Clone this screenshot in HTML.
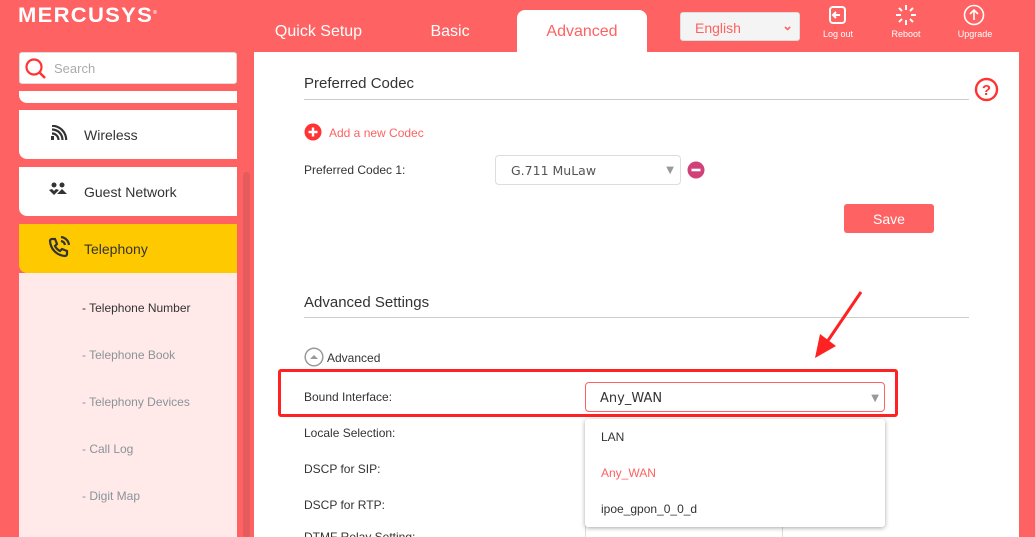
<!DOCTYPE html>
<html style="width:1035px;height:537px;overflow:hidden"><head><meta charset="utf-8"><style>
*{margin:0;padding:0;box-sizing:border-box}
body{width:1035px;height:537px;overflow:hidden;background:#fe6262;font-family:"Liberation Sans",Arial,sans-serif;position:relative}
.a{position:absolute}
.logo{left:18px;top:4px;color:#fff;font-weight:900;font-size:21px;letter-spacing:1.2px;transform:scaleX(1.05);transform-origin:left}
.tab{top:10px;height:42px;color:#fff;font-size:16px;line-height:44px;text-align:center}
.side{left:19px;width:218px;background:#fff}
.item{height:49px;border-radius:0 0 0 8px;font-size:14px;color:#333;line-height:50px;padding-left:65px}
.sub{left:82px;font-size:12px;color:#8a9499}
.lbl{left:304px;font-size:12px;color:#333}
.hdr{left:304px;font-size:15px;color:#333}
.line{left:304px;width:665px;height:1px;background:#ccc}
.tico{color:#fff;font-size:9px;text-align:center;width:50px}
</style></head><body>
<div class="a logo">MERCUSYS<sup style="font-size:5px">®</sup></div>
<div class="a tab" style="left:262px;width:113px">Quick Setup</div>
<div class="a tab" style="left:400px;width:100px">Basic</div>
<div class="a tab" style="left:517px;width:130px;background:#fff;color:#fe6262;border-radius:8px 8px 0 0">Advanced</div>
<div class="a" style="left:680px;top:12px;width:120px;height:29px;background:#f4f4f4;border:1px solid #ddd;border-radius:3px;color:#fe6262;font-size:14px;line-height:30px;padding-left:14px">English<span style="position:absolute;right:6px;top:-2px;font-size:13px;font-weight:bold">⌄</span></div>
<svg class="a" style="left:826px;top:5px" width="24" height="20"><rect x="4" y="2" width="15" height="16" rx="3" fill="none" stroke="#fff" stroke-width="2"/><path d="M14 10H8M10 7l-3 3 3 3" stroke="#fff" stroke-width="2" fill="none"/></svg>
<div class="a tico" style="left:813px;top:29px">Log out</div>
<svg class="a" style="left:895px;top:4px" width="22" height="22" stroke="#fff" stroke-width="2"><path d="M11 1v5M11 16v5M1 11h5M16 11h5M4 4l3 3M15 15l3 3M4 18l3-3M15 7l3-3"/></svg>
<div class="a tico" style="left:881px;top:29px">Reboot</div>
<svg class="a" style="left:963px;top:4px" width="22" height="22"><circle cx="11" cy="11" r="9.5" fill="none" stroke="#fff" stroke-width="1.6"/><path d="M11 16V6M7 10l4-4 4 4" stroke="#fff" stroke-width="1.6" fill="none"/></svg>
<div class="a tico" style="left:950px;top:29px">Upgrade</div>

<div class="a side" style="top:52px;height:32px;border-radius:3px;border:1px solid #ddd"></div>
<svg class="a" style="left:24px;top:57px" width="24" height="24"><circle cx="10" cy="10" r="7.5" fill="none" stroke="#f33" stroke-width="2.2"/><path d="M15 15l6 6" stroke="#f33" stroke-width="2.5"/></svg>
<div class="a" style="left:54px;top:61px;font-size:13px;color:#aaa">Search</div>
<div class="a side" style="top:91px;height:12px;border-radius:0 0 0 8px"></div>
<div class="a side item" style="top:110px">Wireless</div>
<div class="a side item" style="top:167px">Guest Network</div>
<div class="a side item" style="top:224px;background:#ffc900">Telephony</div>
<div class="a side" style="top:273px;height:264px;background:#ffe9e9"></div>
<svg class="a" style="left:51px;top:125px" width="17" height="17"><rect x="0" y="11" width="3" height="4" fill="#333"/><path d="M1 8.5a6.5 6.5 0 0 1 6.5 6.5M1 4.5a10.5 10.5 0 0 1 10.5 10.5M1 0.8a14.2 14.2 0 0 1 14.2 14.2" stroke="#333" stroke-width="2.2" fill="none"/></svg>
<svg class="a" style="left:48px;top:182px" width="22" height="14" fill="#333"><circle cx="6" cy="3" r="2.5"/><circle cx="14" cy="3" r="2.5"/><path d="M1 8l3-1 2 2 2-2 3 1-5 5zM9 12l5-5 5 5z"/></svg>
<svg class="a" style="left:48px;top:236px" width="22" height="22" fill="none" stroke="#333" stroke-width="2.2"><path d="M4 3l3 0 2 5-2 2a11 11 0 0 0 5 5l2-2 5 2v3a2 2 0 0 1-2 2A16 16 0 0 1 2 5a2 2 0 0 1 2-2z"/><path d="M13 5a5 5 0 0 1 4 4M13 1a9 9 0 0 1 8 8"/></svg>
<div class="a sub" style="top:301px;color:#333">- Telephone Number</div>
<div class="a sub" style="top:348px">- Telephone Book</div>
<div class="a sub" style="top:395px">- Telephony Devices</div>
<div class="a sub" style="top:442px">- Call Log</div>
<div class="a sub" style="top:489px">- Digit Map</div>
<div class="a" style="left:243px;top:172px;width:7px;height:365px;background:#e65c5c;border-radius:3px"></div>

<div class="a" style="left:254px;top:52px;width:765px;height:485px;background:#fff;overflow:hidden">
<div class="a" style="left:50px;top:478px;font-size:12px;color:#333">DTMF Relay Setting:</div>
<div class="a" style="left:331px;top:468px;width:198px;height:20px;border:1px solid #ddd"></div>
</div>
<div class="a hdr" style="top:75px">Preferred Codec</div>
<div class="a line" style="top:99px"></div>
<svg class="a" style="left:974px;top:77px" width="25" height="25"><circle cx="12.5" cy="12.5" r="10.5" fill="none" stroke="#f33" stroke-width="2.4"/><text x="12.5" y="18" text-anchor="middle" font-size="15" font-weight="bold" fill="#f33" font-family="Liberation Sans">?</text></svg>
<svg class="a" style="left:304px;top:123px" width="18" height="18"><circle cx="9" cy="9" r="8.5" fill="#f33"/><path d="M9 4.5v9M4.5 9h9" stroke="#fff" stroke-width="2.4"/></svg>
<div class="a" style="left:329px;top:126px;font-size:12px;color:#fe6262">Add a new Codec</div>
<div class="a lbl" style="top:163px">Preferred Codec 1:</div>
<div class="a" style="left:495px;top:155px;width:186px;height:30px;border:1px solid #ddd;border-radius:4px;font-family:'DejaVu Sans',sans-serif;font-size:12.5px;color:#555;line-height:30px;padding-left:15px">G.711 MuLaw<span style="position:absolute;right:6px;top:0;color:#999;font-size:10px">▼</span></div>
<svg class="a" style="left:687px;top:161px" width="18" height="18"><circle cx="9" cy="9" r="8.5" fill="#d0417a"/><path d="M4.5 9h9" stroke="#fff" stroke-width="2.6"/></svg>
<div class="a" style="left:844px;top:204px;width:90px;height:29px;background:#fe6262;border-radius:3px;color:#fff;font-size:14px;text-align:center;line-height:30px">Save</div>
<div class="a hdr" style="top:294px">Advanced Settings</div>
<div class="a line" style="top:317px"></div>
<svg class="a" style="left:304px;top:347px" width="20" height="20"><circle cx="10" cy="10" r="8.8" fill="none" stroke="#999" stroke-width="1.5"/><path d="M6 12l4-4 4 4z" fill="#999"/></svg>
<div class="a lbl" style="left:327px;top:351px">Advanced</div>
<div class="a" style="left:278px;top:369px;width:620px;height:48px;border:3px solid #f22;border-radius:3px"></div>
<div class="a lbl" style="top:390px">Bound Interface:</div>
<div class="a" style="left:585px;top:382px;width:300px;height:30px;border:1px solid #fe6262;border-radius:4px;font-family:'DejaVu Sans',sans-serif;font-size:13px;color:#333;line-height:31px;padding-left:14px">Any_WAN<span style="position:absolute;right:5px;top:0;color:#999;font-size:10px">▼</span></div>
<div class="a lbl" style="top:426px">Locale Selection:</div>
<div class="a lbl" style="top:462px">DSCP for SIP:</div>
<div class="a lbl" style="top:498px">DSCP for RTP:</div>
<div class="a" style="left:585px;top:419px;width:300px;height:108px;background:#fff;border-radius:3px;box-shadow:0 1px 5px rgba(0,0,0,.35);font-size:12px">
<div class="a" style="left:16px;top:11px;color:#333">LAN</div>
<div class="a" style="left:16px;top:47px;color:#fe6262">Any_WAN</div>
<div class="a" style="left:16px;top:83px;color:#333">ipoe_gpon_0_0_d</div></div>
<svg class="a" style="left:805px;top:290px" width="60" height="72"><path d="M56 2L22 52" stroke="#f22" stroke-width="3"/><path d="M10 68L15 44 31 56z" fill="#f22"/></svg>
</body></html>
